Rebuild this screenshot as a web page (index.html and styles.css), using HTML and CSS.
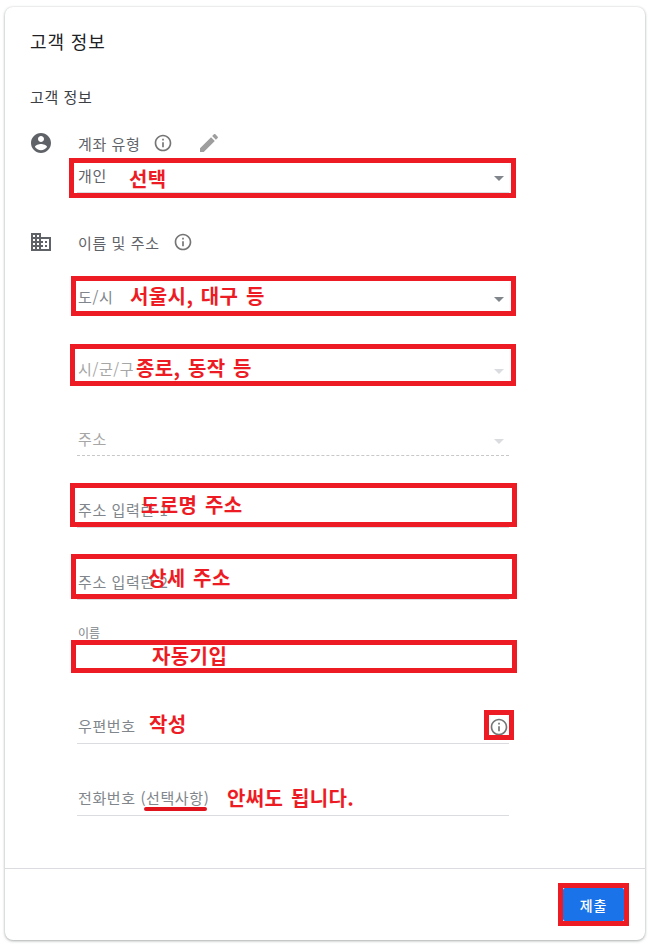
FILE: index.html
```html
<!DOCTYPE html>
<html lang="ko">
<head>
  <meta charset="UTF-8">
  <meta name="viewport" content="width=device-width, initial-scale=1.0">
  <title>고객 정보</title>
  <link rel="stylesheet" href="styles.css">
</head>
<body>
  <div class="page">
    <div class="card">
      <div class="card-body">
        <h1 class="title">고객 정보</h1>
        <h2 class="subtitle">고객 정보</h2>

        <div class="group group-account">
          <svg class="group-icon" viewBox="0 0 24 24"><path d="M12 2C6.48 2 2 6.48 2 12s4.48 10 10 10 10-4.48 10-10S17.52 2 12 2zm0 3c1.66 0 3 1.34 3 3s-1.34 3-3 3-3-1.34-3-3 1.34-3 3-3zm0 14.2c-2.5 0-4.71-1.28-6-3.22.03-1.99 4-3.08 6-3.08 1.99 0 5.97 1.09 6 3.08-1.29 1.94-3.5 3.22-6 3.22z"/></svg>
          <div class="group-main">
            <div class="group-label">
              <span>계좌 유형</span>
              <svg class="info-icon" viewBox="0 0 24 24"><path d="M11 7h2v2h-2zm0 4h2v6h-2zm1-9C6.48 2 2 6.48 2 12s4.48 10 10 10 10-4.48 10-10S17.52 2 12 2zm0 18c-4.41 0-8-3.59-8-8s3.59-8 8-8 8 3.59 8 8-3.59 8-8 8z"/></svg>
              <svg class="edit-icon" viewBox="0 0 24 24"><path d="M3 17.25V21h3.75L17.81 9.94l-3.75-3.75L3 17.25zM20.71 7.04c.39-.39.39-1.02 0-1.41l-2.34-2.34c-.39-.39-1.02-.39-1.41 0l-1.83 1.83 3.75 3.75 1.83-1.83z"/></svg>
            </div>
            <div class="field field-select field-type">
              <span class="value">개인</span>
              <span class="arrow"></span>
            </div>
          </div>
        </div>

        <div class="group group-address">
          <svg class="group-icon" viewBox="0 0 24 24"><path d="M12 7V3H2v18h20V7H12zM6 19H4v-2h2v2zm0-4H4v-2h2v2zm0-4H4V9h2v2zm0-4H4V5h2v2zm4 12H8v-2h2v2zm0-4H8v-2h2v2zm0-4H8V9h2v2zm0-4H8V5h2v2zm10 12h-8v-2h2v-2h-2v-2h2v-2h-2V9h8v10zm-2-8h-2v2h2v-2zm0 4h-2v2h2v-2z"/></svg>
          <div class="group-main">
            <div class="group-label">
              <span>이름 및 주소</span>
              <svg class="info-icon" viewBox="0 0 24 24"><path d="M11 7h2v2h-2zm0 4h2v6h-2zm1-9C6.48 2 2 6.48 2 12s4.48 10 10 10 10-4.48 10-10S17.52 2 12 2zm0 18c-4.41 0-8-3.59-8-8s3.59-8 8-8 8 3.59 8 8-3.59 8-8 8z"/></svg>
            </div>
            <div class="field field-select field-city">
              <span class="placeholder">도/시</span>
              <span class="arrow"></span>
            </div>
            <div class="field field-select field-district disabled">
              <span class="placeholder">시/군/구</span>
              <span class="arrow"></span>
            </div>
            <div class="field field-select field-street disabled">
              <span class="placeholder">주소</span>
              <span class="arrow"></span>
            </div>
            <div class="field">
              <span class="placeholder">주소 입력란 1</span>
            </div>
            <div class="field">
              <span class="placeholder">주소 입력란 2</span>
            </div>
            <div class="field field-name">
              <span class="small-label">이름</span>
            </div>
            <div class="field">
              <span class="placeholder">우편번호</span>
              <svg class="info-icon" viewBox="0 0 24 24"><path d="M11 7h2v2h-2zm0 4h2v6h-2zm1-9C6.48 2 2 6.48 2 12s4.48 10 10 10 10-4.48 10-10S17.52 2 12 2zm0 18c-4.41 0-8-3.59-8-8s3.59-8 8-8 8 3.59 8 8-3.59 8-8 8z"/></svg>
            </div>
            <div class="field">
              <span class="placeholder">전화번호 (선택사항)</span>
            </div>
          </div>
        </div>
      </div>

      <div class="card-footer">
        <button class="submit">제출</button>
      </div>
    </div>

    <!-- red notes drawn over the form -->
    <div class="mark mark-type"></div>
    <div class="mark mark-city"></div>
    <div class="mark mark-district"></div>
    <div class="mark mark-addr1"></div>
    <div class="mark mark-addr2"></div>
    <div class="mark mark-name"></div>
    <div class="mark mark-info"></div>
    <div class="mark mark-submit"></div>
    <div class="mark-line"></div>

    <span class="note note-type">선택</span>
    <span class="note note-city">서울시, 대구 등</span>
    <span class="note note-district">종로, 동작 등</span>
    <span class="note note-addr1">도로명 주소</span>
    <span class="note note-addr2">상세 주소</span>
    <span class="note note-name">자동기입</span>
    <span class="note note-zip">작성</span>
    <span class="note note-phone">안써도 됩니다.</span>
  </div>
</body>
</html>
```

FILE: styles.css
```css
* {
  box-sizing: border-box;
}

body {
  margin: 0;
  background-color: #fff;
  font-family: "Noto Sans CJK KR", "Noto Sans", sans-serif;
}

.page {
  position: relative;
  width: 651px;
  height: 946px;
  padding: 7px 6px 6px 5px;
  overflow: hidden;
}

.card {
  display: flex;
  flex-direction: column;
  height: 100%;
  background-color: #fff;
  border-radius: 8px;
  box-shadow: 0 1px 3px rgba(60, 64, 67, 0.4), 0 0 2px rgba(60, 64, 67, 0.15);
}

.card-body {
  flex: 1;
  padding: 20px 25px 0;
}

.title {
  margin: 0;
  font-size: 18px;
  font-weight: 400;
  line-height: 28px;
  letter-spacing: 0.9px;
  color: #202124;
}

.subtitle {
  margin: 32px 0 24px;
  font-size: 15px;
  font-weight: 400;
  line-height: 20px;
  letter-spacing: 0.6px;
  color: #3c4043;
}

.group {
  display: flex;
  gap: 24px;
}

.group-address {
  margin-top: 37px;
}

.group-icon {
  flex: none;
  width: 24px;
  height: 24px;
  margin-left: -1px;
  fill: #5f6368;
}

.group-main {
  width: 432px;
}

.group-label {
  display: flex;
  align-items: center;
  height: 24px;
  padding-left: 1px;
  font-size: 15px;
  letter-spacing: 0.6px;
  color: #5f6368;
}

.info-icon {
  flex: none;
  width: 20px;
  height: 20px;
  margin-left: 13px;
  fill: #757575;
}

.edit-icon {
  flex: none;
  width: 24px;
  height: 24px;
  margin-left: 24px;
  fill: #9e9e9e;
}

.field {
  display: flex;
  justify-content: space-between;
  align-items: flex-end;
  height: 72px;
  padding: 0 0 7px 1px;
  font-size: 15px;
  line-height: 20px;
  letter-spacing: 0.6px;
  border-bottom: 1px solid #dadce0;
}

.field .info-icon {
  margin: 0 0 -1px;
}

.field-select {
  padding-bottom: 6px;
}

.field-type {
  height: 38px;
}

.field-city {
  height: 60px;
}

.field-street {
  height: 70px;
  border-bottom: 1px dashed #c8c8c8;
}

.field-name {
  align-items: flex-start;
  padding-top: 25px;
  padding-bottom: 0;
}

.value {
  color: #5f6368;
}

.placeholder {
  color: #80868b;
}

.disabled .placeholder {
  color: #a6a6a6;
}

.small-label {
  font-size: 12px;
  line-height: 16px;
  letter-spacing: 0;
  color: #80868b;
}

.arrow {
  width: 0;
  height: 0;
  margin: 0 5px 5px 0;
  border-top: 5px solid #80868b;
  border-left: 5px solid transparent;
  border-right: 5px solid transparent;
}

.disabled .arrow {
  border-top-color: #dadce0;
}

.card-footer {
  display: flex;
  justify-content: flex-end;
  padding: 19px 21px 19px;
  border-top: 1px solid #dadce0;
}

.submit {
  width: 61px;
  height: 33px;
  padding: 0;
  border: none;
  border-radius: 2px;
  background-color: #1a73e8;
  font-family: inherit;
  font-size: 14px;
  font-weight: 500;
  letter-spacing: 0.8px;
  color: #fff;
}

/* annotations */
.mark {
  position: absolute;
  border: 5px solid #ed1c24;
}

.mark-type { left: 69px; top: 158px; width: 447px; height: 40px; }
.mark-city { left: 71px; top: 276px; width: 445px; height: 40px; }
.mark-district { left: 70px; top: 344px; width: 446px; height: 42px; }
.mark-addr1 { left: 70px; top: 483px; width: 447px; height: 44px; }
.mark-addr2 { left: 71px; top: 554px; width: 446px; height: 45px; }
.mark-name { left: 71px; top: 640px; width: 446px; height: 33px; }
.mark-info { left: 484px; top: 710px; width: 30px; height: 30px; }
.mark-submit { left: 558px; top: 883px; width: 71px; height: 43px; }

.mark-line {
  position: absolute;
  left: 144px;
  top: 807px;
  width: 63px;
  height: 4px;
  border-radius: 2px;
  background-color: #e0141c;
}

.note {
  position: absolute;
  font-size: 20px;
  font-weight: 700;
  line-height: 28px;
  letter-spacing: 0.4px;
  word-spacing: 1.5px;
  white-space: nowrap;
  color: #ed1c24;
}

.note-type { left: 129px; top: 165px; }
.note-city { left: 130px; top: 282px; }
.note-district { left: 136px; top: 354px; }
.note-addr1 { left: 141px; top: 491px; }
.note-addr2 { left: 148px; top: 564px; }
.note-name { left: 152px; top: 642px; }
.note-zip { left: 149px; top: 710px; }
.note-phone { left: 227px; top: 784px; }
```
